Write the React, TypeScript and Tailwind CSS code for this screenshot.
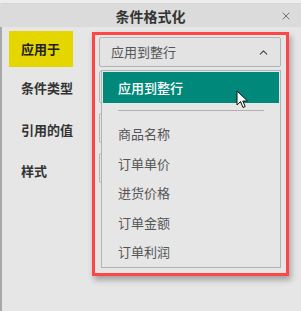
import { ChevronUp, X } from 'lucide-react'

const font = { fontFamily: '"Noto Sans CJK SC", "Noto Sans", sans-serif' }

const options = ['商品名称', '订单单价', '进货价格', '订单金额', '订单利润']

export default function App() {
  return (
    <div className="relative w-[301px] h-[311px] overflow-hidden bg-[#e6e6e6]" style={font}>
      <div className="h-[4px] bg-[#ededed] border-b border-[#d6d6d6]" />
      <div className="flex h-[23px] items-center justify-center rounded-tl-[3px] bg-[#dbdbdb] relative">
        <span className="text-[14px] font-bold text-[#333] leading-none">条件格式化</span>
        <X className="absolute right-[9px] top-[6px] text-[#555]" size={12} strokeWidth={1.6} />
      </div>

      <div className="flex h-[284px] border-l-2 border-[#a8a8a8]">
        <div className="w-[88px] pt-[4px] pl-[7px] flex flex-col">
          <div className="flex h-[36px] w-[64px] items-center pl-[12px] bg-[#e6d600] text-[13px] font-bold text-[#222]">
            应用于
          </div>
          <div className="mt-[12px] pl-[12px] text-[13px] font-bold text-[#333] leading-[18px]">条件类型</div>
          <div className="mt-[24px] pl-[12px] text-[13px] font-bold text-[#333] leading-[18px]">引用的值</div>
          <div className="mt-[23px] pl-[12px] text-[13px] font-bold text-[#333] leading-[18px]">样式</div>
        </div>

        <div className="relative flex-1 pt-[10px] pl-[9px]">
          <div className="flex h-[30px] w-[182px] items-center justify-between rounded-[2px] border border-[#b4b4b4] bg-[#e3e3e3] pl-[11px] pr-[10px]">
            <span className="text-[13px] text-[#555]">应用到整行</span>
            <ChevronUp size={13} strokeWidth={2} className="text-[#444]" />
          </div>
          <div className="mt-[4px] flex flex-col gap-[10px]">
            <div className="h-[32px] w-[182px] rounded-[2px] border border-[#b4b4b4]" />
            <div className="h-[30px] w-[182px] rounded-[2px] border border-[#b4b4b4]" />
            <div className="h-[30px] w-[182px] rounded-[2px] border border-[#b4b4b4]" />
          </div>

          <div className="absolute left-[11px] top-[43px] w-[180px] h-[198px] border border-[#b4b4b4] bg-[#e6e6e6] p-px">
            <div className="flex h-[31px] items-center bg-[#00897b] pl-[15px] text-[13px] font-medium text-white">
              应用到整行
            </div>
            <div className="mx-[15px] mt-[7px] border-t border-[#b0b0b0]" />
            <div className="flex flex-col pl-[15px] pt-[8px]">
              {options.map((o) => (
                <div key={o} className="flex h-[29.5px] items-center text-[13px] text-[#555]">
                  {o}
                </div>
              ))}
            </div>
          </div>
        </div>
      </div>

      <div className="pointer-events-none absolute left-[92px] top-[32px] h-[244px] w-[197px] border-[3px] border-[#ff4646] shadow-[2px_4px_6px_rgba(0,0,0,0.3)]" />

      <svg className="absolute left-[236px] top-[90px]" width="14" height="20" viewBox="0 0 14 20">
        <path d="M1 1 L1 15 L4.5 11.5 L7 17.5 L9.2 16.5 L6.8 11 L11.5 11 Z" fill="white" stroke="#111" strokeWidth="1" strokeLinejoin="round" />
      </svg>
    </div>
  )
}
